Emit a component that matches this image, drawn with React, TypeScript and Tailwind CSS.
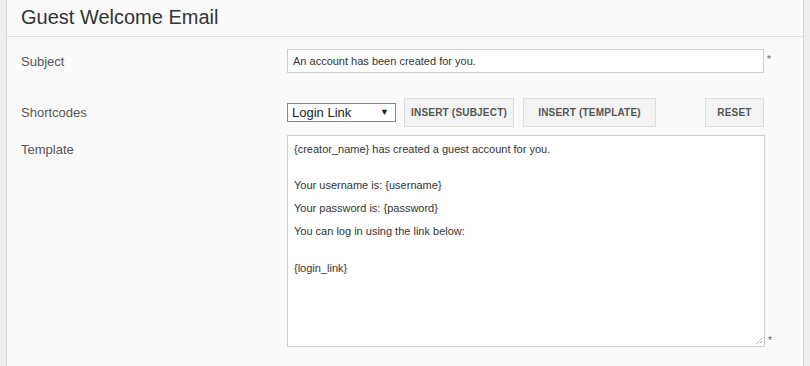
import React from "react";

export default function App() {
  const font = { fontFamily: '"Liberation Sans", Arial, sans-serif' };
  return (
    <div className="h-[366px] w-[810px] overflow-hidden bg-[#eeeeee] pl-[6px] pr-[6px]" style={font}>
      <div className="h-full border-x border-[#d5d5d5] bg-[#fafafa]">
        <div className="h-[37px] border-b border-[#e0e0e0] pl-[14px] pt-[4px]">
          <h1 className="text-[20px] leading-[26px] text-[#333]">Guest Welcome Email</h1>
        </div>

        <div className="flex pl-[14px] pt-[12px]">
          <div className="w-[266px] pt-[3px] text-[13px] text-[#555]">Subject</div>
          <input
            defaultValue="An account has been created for you."
            className="h-[24px] w-[477px] border border-[#cfcfcf] bg-white px-[5px] text-[11px] text-[#333] outline-none"
          />
          <span className="ml-[3px] pt-[4px] text-[10px] leading-[14px] text-[#666]">*</span>
        </div>

        <div className="flex items-center pl-[14px] pt-[25px]">
          <div className="w-[266px] text-[13px] text-[#555]">Shortcodes</div>
          <div className="flex h-[19px] w-[109px] items-center justify-between border border-[#888] bg-white pl-[4px] pr-[6px] text-[13px] text-[#222]">
            <span>Login Link</span>
            <span className="text-[9px]">▼</span>
          </div>
          <Btn className="ml-[8px] w-[110px]">INSERT (SUBJECT)</Btn>
          <Btn className="ml-[9px] w-[133px]">INSERT (TEMPLATE)</Btn>
          <Btn className="ml-[49px] w-[59px]">RESET</Btn>
        </div>

        <div className="flex pl-[14px] pt-[8px]">
          <div className="w-[266px] pt-[5px] text-[13px] text-[#555]">Template</div>
          <div className="relative h-[212px] w-[478px] border border-[#cfcfcf] bg-white px-[6px] pt-[6px] text-[11px] text-[#333]">
            <p className="leading-[14px]">{"{creator_name} has created a guest account for you."}</p>
            <p className="mt-[22px] leading-[14px]">{"Your username is: {username}"}</p>
            <p className="mt-[9px] leading-[14px]">{"Your password is: {password}"}</p>
            <p className="mt-[9px] leading-[14px]">You can log in using the link below:</p>
            <p className="mt-[23px] leading-[14px]">{"{login_link}"}</p>
            <svg className="absolute bottom-[1px] right-[1px]" width="9" height="9" viewBox="0 0 9 9">
              <path d="M8 2 L2 8 M8 5 L5 8" stroke="#777" strokeWidth="1" strokeDasharray="1 1" />
            </svg>
          </div>
          <span className="ml-[3px] self-end pb-[1px] text-[10px] leading-[10px] text-[#666]">*</span>
        </div>
      </div>
    </div>
  );
}

function Btn({ children, className }: { children: React.ReactNode; className?: string }) {
  return (
    <button className={`h-[29px] border border-[#dcdcdc] bg-[#f3f3f3] text-[10px] font-bold tracking-[0.2px] text-[#555] ${className ?? ""}`}>
      {children}
    </button>
  );
}
